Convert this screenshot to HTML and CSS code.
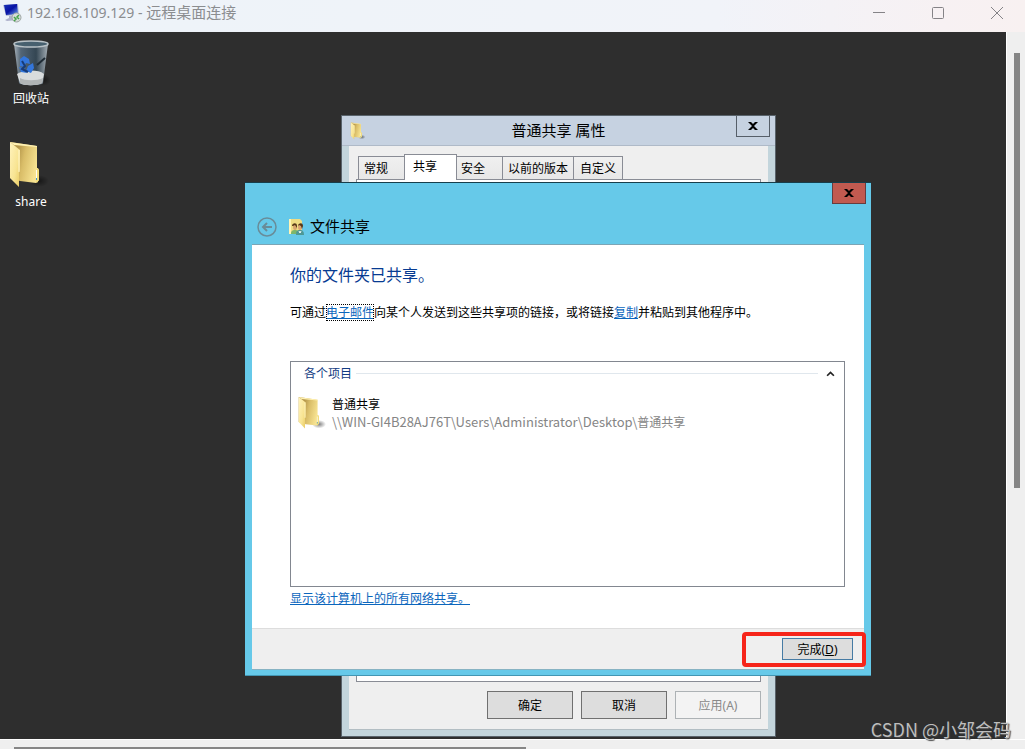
FILE: index.html
```html
<!DOCTYPE html>
<html lang="zh-CN">
<head>
<meta charset="utf-8">
<title>192.168.109.129 - 远程桌面连接</title>
<link rel="stylesheet" href="styles.css">
</head>
<body>
<svg class="defs" aria-hidden="true">
  <defs>
    <linearGradient id="foldBack" x1="0" y1="0" x2="1" y2=".3"><stop offset=".3" stop-color="#b5974b"/><stop offset=".55" stop-color="#d9bd68"/><stop offset="1" stop-color="#f7e391"/></linearGradient>
    <linearGradient id="foldFront" x1="0" y1="0" x2="1" y2="1"><stop offset="0" stop-color="#fff3bd"/><stop offset=".6" stop-color="#f8e492"/><stop offset="1" stop-color="#e8c95f"/></linearGradient>
    <linearGradient id="screen" x1="0" y1="0" x2="1" y2="1"><stop offset="0" stop-color="#1b35b8"/><stop offset=".5" stop-color="#0712a4"/><stop offset="1" stop-color="#6fa5ec"/></linearGradient>
    <linearGradient id="glass" x1="0" y1="0" x2="1" y2="0"><stop offset="0" stop-color="#a7b1b9"/><stop offset=".2" stop-color="#536575"/><stop offset=".65" stop-color="#344653"/><stop offset="1" stop-color="#a4adb4"/></linearGradient>
    <radialGradient id="shade"><stop offset="0" stop-color="#000" stop-opacity=".5"/><stop offset="1" stop-color="#000" stop-opacity="0"/></radialGradient>
    <symbol id="folder" viewBox="0 0 40 48">
      <ellipse cx="30" cy="40" rx="10" ry="6" fill="url(#shade)"/>
      <path d="M1 1 28 5v22l2 2v10l-3 3-16-2L1 37z" fill="url(#foldBack)"/>
      <path d="m1 1 10 8v20l-1 2v15L1 37z" fill="url(#foldFront)"/>
      <path d="M10 9v22" fill="none" stroke="#fff6cc"/>
      <path d="m1 1 27 4v1L5 4z" fill="#fff1b2"/>
      <path d="M28 27h1l1 2v10l-2 3-1-1z" fill="#f2dc7a"/>
      <path d="M27 29h1v8h-1z" fill="#fffef1"/>
      <path d="M27 37h1v2h-1z" fill="#3b9bd1"/>
    </symbol>
  </defs>
</svg>
<div class="client">
  <header class="client-bar">
    <svg class="client-icon" viewBox="0 0 20 20" aria-hidden="true">
      <path d="m1 2 15-1 1 11-13 1z" fill="#b7bed4"/><path d="m2 2 13-1 1 10-12 1z" fill="url(#screen)"/>
      <path d="m7 13 5-1v3l3 2-10 1-2-1 4-2z" fill="#aeb2cc"/>
      <circle cx="14.500" cy="14.500" r="4.500" fill="#d7dcda" stroke="#9fa7a5"/>
      <path d="m12 14 2 2-2 2m5-6-2 2 2 2" fill="none" stroke="#45a548" stroke-width="1.500"/>
    </svg>
    <h1 class="client-title"><span class="address">192.168.109.129 - </span>远程桌面连接</h1>
    <div class="client-controls">
      <button class="client-button" aria-label="最小化"><svg viewBox="0 0 14 14"><path d="M1 6.500h12"/></svg></button>
      <button class="client-button" aria-label="最大化"><svg viewBox="0 0 14 14"><rect x="1.500" y="1.500" width="11" height="11" rx="1"/></svg></button>
      <button class="client-button" aria-label="关闭"><svg viewBox="0 0 14 14"><path d="m1 1 12 12M13 1 1 13"/></svg></button>
    </div>
  </header>
  <main class="desktop">
    <div class="shortcuts">
      <div class="shortcut">
        <svg class="shortcut-icon" viewBox="0 0 40 48" aria-hidden="true">
          <ellipse cx="32" cy="40" rx="8" ry="6" fill="url(#shade)"/>
          <path d="M3 4h34l-5 39c0 3-23 3-24 0z" fill="url(#glass)"/>
          <path d="M6 34c6-4 21-5 27 0l-2 9c-5 3-18 3-22 0z" fill="#d9dcdd"/>
          <path d="M9 38c5 3 17 3 23 0l-1 5c-5 3-18 3-22 0z" fill="#b1b5b6"/>
          <path d="m9 19 4-3 5 3 1 5-4-1-2 4-4-1zM17 26l5-3 1 5-3 5-5-2zM8 27l5 1 3 5-6-1z" fill="#3376dc"/>
          <path d="m11 21 3 5-3 3 6 3" fill="none" stroke="#173b78" stroke-width="2"/>
          <path d="m26 25 8-7" stroke="#202c36" stroke-width="2"/>
          <ellipse cx="20" cy="4" rx="17" ry="3" fill="#47606f" stroke="#b9c2c7" stroke-width="1.500"/>
        </svg>
        <span>回收站</span>
      </div>
      <div class="shortcut shortcut-folder">
        <svg class="shortcut-icon" aria-hidden="true"><use href="#folder"/></svg>
        <span>share</span>
      </div>
    </div>

    <section class="properties" aria-labelledby="properties-title">
      <header class="properties-bar">
        <svg class="properties-icon" aria-hidden="true"><use href="#folder"/></svg>
        <h2 id="properties-title">普通共享 属性</h2>
        <button class="window-close" aria-label="关闭"><svg viewBox="0 0 10 8"><path d="M0 0h3l2 2 2-2h3L6 4l4 4H7L5 6 3 8H0l4-4z"/></svg></button>
      </header>
      <div class="properties-body">
        <div class="tabs" role="tablist">
          <button class="tab tab-first" role="tab">常规</button>
          <button class="tab tab-active" role="tab" aria-selected="true">共享</button>
          <button class="tab tab-wide" role="tab">安全</button>
          <button class="tab" role="tab">以前的版本</button>
          <button class="tab" role="tab">自定义</button>
        </div>
        <div class="tab-page"></div>
        <div class="properties-actions">
          <button class="action">确定</button>
          <button class="action">取消</button>
          <button class="action" disabled>应用(A)</button>
        </div>
      </div>
    </section>

    <section class="sharing" role="dialog" aria-labelledby="sharing-title">
      <button class="window-close sharing-close" aria-label="关闭"><svg viewBox="0 0 10 8"><path d="M0 0h3l2 2 2-2h3L6 4l4 4H7L5 6 3 8H0l4-4z"/></svg></button>
      <header class="sharing-bar">
        <button class="back" aria-label="返回"><svg viewBox="0 0 20 20"><circle cx="10" cy="10" r="9"/><path d="M15 10H6m4-4-4 4 4 4" stroke-width="2"/></svg></button>
        <svg class="sharing-icon" viewBox="0 0 16 16" aria-hidden="true">
          <path d="M1 0h11l2 2v13H1z" fill="#efdc83"/><path d="M1 0h2v15H1z" fill="#fff4b5"/>
          <path d="M3 15c0-3 1-4 4-4s3 1 3 4z" fill="#7db66b"/><path d="M8 16c0-4 1-5 4-5s4 2 4 5z" fill="#4d9896"/>
          <ellipse cx="7" cy="8" rx="2" ry="3" fill="#d7a56f"/><ellipse cx="12" cy="8" rx="2" ry="3" fill="#dba472"/>
          <path d="M4 7c0-3 5-4 5 0v2L7 6 5 7zM10 7c0-3 5-4 5 0l-1 3-1-3-2-1z" fill="#563818"/>
          <path d="m11 12 1 2 1-2" fill="none" stroke="#fff"/>
        </svg>
        <h2 id="sharing-title">文件共享</h2>
      </header>
      <div class="sharing-content">
        <h3 class="lead">你的文件夹已共享。</h3>
        <p class="message">可通过<a class="focused" href="#email">电子邮件</a>向某个人发送到这些共享项的链接，或将链接<a href="#copy">复制</a>并粘贴到其他程序中。</p>
        <div class="items">
          <div class="group">
            <span>各个项目</span><i class="rule"></i>
            <button class="collapse" aria-label="折叠"><svg viewBox="0 0 8 6"><path d="m1 5 3-3 3 3"/></svg></button>
          </div>
          <div class="item">
            <svg class="item-icon" aria-hidden="true"><use href="#folder"/></svg>
            <div><div>普通共享</div><div class="path"><span class="path-latin">\\WIN-GI4B28AJ76T\Users\Administrator\Desktop\</span>普通共享</div></div>
          </div>
        </div>
        <a class="all-shares" href="#shares">显示该计算机上的所有网络共享。</a>
      </div>
      <footer class="sharing-footer">
        <button class="done">完成(<u>D</u>)</button>
        <div class="highlight"></div>
      </footer>
    </section>
  </main>
  <div class="scroll-y"><div class="thumb-y"></div></div>
  <div class="scroll-x"><div class="thumb-x"></div></div>
  <div class="watermark">CSDN @小邹会码</div>
</div>
</body>
</html>
```
FILE: styles.css
```css
* { box-sizing: border-box; }
body { margin: 0; color: #000; font: 12px/17px "Noto Sans", "Noto Sans CJK SC", sans-serif; }
button { margin: 0; padding: 0; color: inherit; font: inherit; border-radius: 0; }
h1, h2, h3, p { margin: 0; font-weight: 400; }
svg { display: block; flex: none; }
a { color: #0b66bd; }
.defs { position: absolute; width: 0; height: 0; }

.client { position: relative; display: grid; grid-template: 32px minmax(0, 1fr) 10px / minmax(0, 1fr) 19px; height: 100vh; overflow: hidden; background: #efefef; }
.client-bar { grid-column: 1 / -1; display: flex; align-items: flex-start; padding-left: 2px; background: linear-gradient(90deg, #edf3f9 0%, #f1f3f9 70%, #f7f1f3 92%, #f8f1f1 100%); }
.client-icon { width: 20px; height: 20px; margin: 3px 5px 0 0; }
.client-title { flex: 1; color: #8b8d90; font-size: 15px; line-height: 24px; white-space: pre; }
.address { font-size: 14px; }
.client-controls { display: flex; gap: 2px; }
.client-button { display: grid; place-items: center; width: 57px; height: 26px; background: none; border: 0; }
.client-button svg { width: 14px; height: 14px; fill: none; stroke: #858387; }

.desktop { position: relative; overflow: hidden; background: #2e2e2e; }
.scroll-y { padding: 21px 5px 0 7px; border-left: 1px solid #fff; }
.thumb-y { height: 63.4%; background: #858585; }
.scroll-x { grid-column: 1 / -1; padding: 7px 499px 0 14px; border-top: 1px solid #fff; }
.thumb-x { height: 2px; background: #858585; }
.watermark { position: absolute; right: 14px; bottom: 7px; color: #bdbdbd; font: 18px/26px "Noto Sans CJK SC", sans-serif; text-shadow: 1px 1px 1px #444; }

.shortcuts { display: flex; flex-direction: column; width: 62px; gap: 34px; padding-top: 8px; color: #fff; text-align: center; }
.shortcut { display: flex; flex-direction: column; align-items: center; gap: 2px; }
.shortcut-icon { width: 40px; height: 48px; }
.shortcut-folder .shortcut-icon { align-self: flex-start; margin-left: 9px; }
.shortcut-folder { gap: 4px; }

.window-close { display: grid; place-items: center; width: 34px; height: 21px; background: transparent; border: 1px solid #565f69; border-top: 0; }
.window-close svg { width: 10px; height: 8px; }
.properties { position: absolute; inset: 83px 230px 2px 341px; display: flex; flex-direction: column; padding: 0 7px 6px; border: 1px solid #59636b; background: #c3d5dc; }
.properties-bar { position: relative; display: flex; align-items: center; justify-content: center; height: 30px; margin: 0 -7px; border-bottom: 1px solid #afbac8; background: #c6d2e1; }
.properties-bar h2 { padding-bottom: 2px; font-size: 15px; line-height: 22px; }
.properties-bar .window-close { position: absolute; top: 0; right: 5px; }
.properties-icon { position: absolute; left: 8px; width: 16px; height: 18px; }
.properties-body { flex: 1; display: flex; flex-direction: column; padding: 9px 7px 10px; border-bottom: 1px solid #b3bec3; background: #efefef; }
.tabs { display: flex; align-items: flex-end; height: 24px; padding-left: 2px; }
.tab { height: 23px; padding: 0 5px; border: 1px solid #898c95; border-bottom: 0; background: linear-gradient(#f0f0f0, #e7e7e7); }
.tab + .tab { border-left: 0; }
.tab:last-child { padding: 0 6px; }
.tab.tab-first { padding: 0 16px 0 5px; }
.tab.tab-active { position: relative; height: 26px; margin: 0 0 -1px -1px; padding: 0 19px 3px 8px; border-left: 1px solid #898c95; background: #fff; }
.tab.tab-wide { padding: 0 17px 0 4px; }
.tab-page { flex: 1; border: 1px solid #898c95; background: #fff; }
.properties-actions { display: flex; justify-content: flex-end; gap: 8px; padding-top: 9px; }
.action { width: 86px; height: 28px; background: #ddd; border: 1px solid #707070; }
.action:disabled { color: #898989; background: #f3f3f3; border-color: #adb2b5; }

.sharing { position: absolute; inset: 150px 135px 63px 245px; display: flex; flex-direction: column; padding: 0 7px 5px; border-top: 1px solid #173e4b; border-bottom: 1px solid #4396b3; background: #66c9e9; }
.sharing-close { position: absolute; top: 0; right: 5px; background: #c15a50; border-color: #673c3e; }
.sharing-bar { display: flex; align-items: center; height: 62px; padding: 26px 0 0 5px; border-bottom: 1px solid #7ca5b5; }
.sharing-bar h2 { padding-bottom: 2px; font-size: 15px; line-height: 22px; }
.back { width: 20px; height: 20px; margin-right: 11px; background: none; border: 0; }
.back svg { width: 20px; height: 20px; fill: none; stroke: #698c99; stroke-width: 1.5px; }
.sharing-icon { width: 16px; height: 16px; margin-right: 6px; }
.sharing-content { flex: 1; display: flex; flex-direction: column; align-items: flex-start; padding: 19px 19px 21px 38px; background: #fff; }
.lead { color: #073b92; font-size: 16px; line-height: 22px; }
.message { margin: 18px 0 40px; }
.focused { outline: 1px dotted #000; outline-offset: -1px; }
.items { flex: 1; align-self: stretch; padding: 3px 9px 0 7px; border: 1px solid #828790; }
.group { display: flex; align-items: center; padding-left: 6px; color: #123b82; }
.rule { flex: 1; height: 1px; margin: 0 8px 0 4px; background: #e0e7ed; }
.collapse { display: grid; place-items: center; width: 9px; height: 16px; background: none; border: 0; }
.collapse svg { width: 9px; height: 7px; fill: none; stroke: #222; stroke-width: 1.5px; }
.item { display: flex; gap: 6px; padding-top: 14px; }
.item-icon { width: 28px; height: 34px; }
.path { color: #858585; }
.path-latin { font: 13px/17px "Noto Sans CJK SC", sans-serif; }
.all-shares { margin-top: 3px; }
.sharing-footer { position: relative; display: flex; justify-content: flex-end; padding: 9px 11px 9px; border-top: 1px solid #ddd; border-bottom: 1px solid #87b3c3; background: #efefef; }
.done { width: 71px; height: 22px; background: #ddd; border: 1px solid #467ba4; }
.highlight { position: absolute; top: 3px; right: -2px; width: 124px; height: 35px; border: 4px solid #f6251a; border-radius: 4px; pointer-events: none; }
```
